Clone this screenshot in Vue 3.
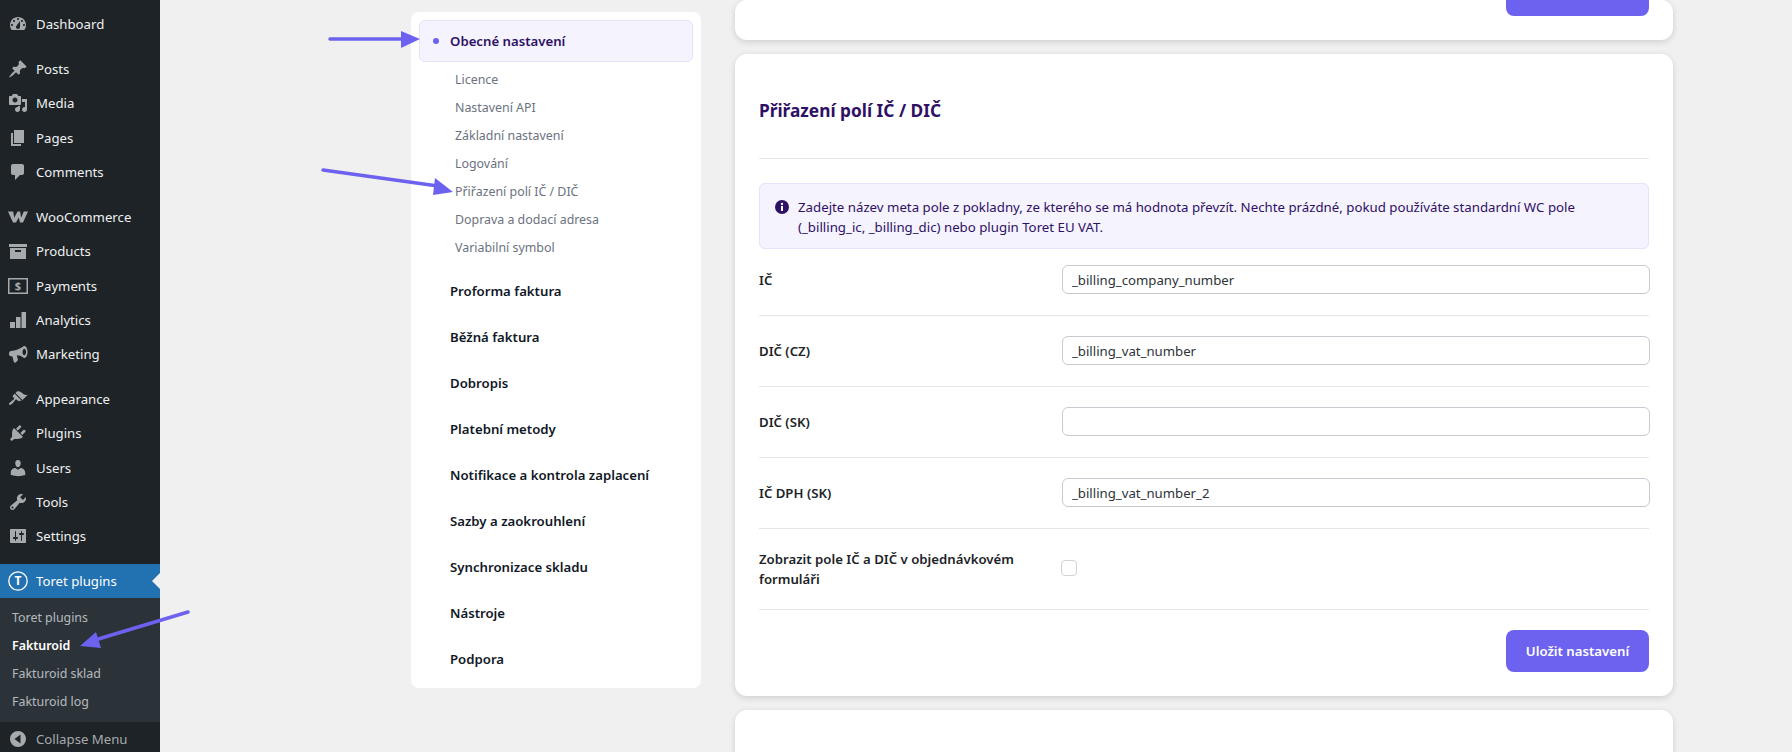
<template>
  <div class="page">
    <aside class="adminmenu">
      <div v-for="(group, g) in menuGroups" :key="g" class="menu-group">
        <div v-for="item in group" :key="item.label" class="menu-item">
          <span class="menu-icon">
            <svg width="20" height="20" viewBox="0 0 20 20">
              <path :d="item.icon" fill="#a7aaad" fill-rule="evenodd" />
              <text v-if="item.label === 'Payments'" x="10" y="14" text-anchor="middle" class="dollar">$</text>
            </svg>
          </span>
          {{ item.label }}
        </div>
      </div>
      <div class="menu-item active">
        <span class="menu-icon">
          <svg width="20" height="20" viewBox="0 0 20 20">
            <circle cx="10" cy="10" r="9.2" fill="none" stroke="#fff" stroke-width="1.3" />
            <text x="10" y="14.4" text-anchor="middle" class="toret-t">T</text>
          </svg>
        </span>
        Toret plugins
      </div>
      <div class="submenu">
        <div v-for="sub in subItems" :key="sub" class="sub-item" :class="{ current: sub === 'Fakturoid' }">{{ sub }}</div>
      </div>
      <div class="collapse">
        <span class="menu-icon">
          <svg width="20" height="20" viewBox="0 0 20 20">
            <path d="M10 2a8 8 0 1 1 0 16 8 8 0 0 1 0-16zm2.5 3.5L6.5 10l6 4.5z" fill="#a7aaad" fill-rule="evenodd" />
          </svg>
        </span>
        Collapse Menu
      </div>
    </aside>

    <main class="content">
      <nav class="side-nav">
        <div class="nav-active"><span class="dot"></span>Obecné nastavení</div>
        <div class="nav-subs">
          <div v-for="link in navLinks" :key="link" class="nav-sub">{{ link }}</div>
        </div>
        <div v-for="section in navSections" :key="section" class="nav-section">{{ section }}</div>
      </nav>

      <div class="cards">
        <div class="card card-top">
          <div class="btn-stub"></div>
        </div>

        <section class="card card-main">
          <h2 class="card-title">Přiřazení polí IČ / DIČ</h2>
          <div class="notice">
            <svg class="notice-icon" width="14" height="14" viewBox="0 0 14 14">
              <circle cx="7" cy="7" r="7" fill="#2e1065" />
              <rect x="6" y="6" width="2" height="5" fill="#fff" />
              <circle cx="7" cy="4" r="1.15" fill="#fff" />
            </svg>
            <p>Zadejte název meta pole z pokladny, ze kterého se má hodnota převzít. Nechte prázdné, pokud používáte standardní WC pole (_billing_ic, _billing_dic) nebo plugin Toret EU VAT.</p>
          </div>
          <div v-for="field in fields" :key="field.label" class="row">
            <label class="row-label">{{ field.label }}</label>
            <input class="text-input" type="text" :value="field.value" />
          </div>
          <div class="row row-check">
            <label class="row-label">Zobrazit pole IČ a DIČ v objednávkovém formuláři</label>
            <span class="checkbox"></span>
          </div>
          <div class="actions">
            <button class="save-btn" type="button">Uložit nastavení</button>
          </div>
        </section>

        <div class="card card-bottom"></div>
      </div>
    </main>

    <!-- annotation arrows drawn over the screenshot -->
    <svg class="arrows" width="1792" height="752" viewBox="0 0 1792 752">
      <g fill="#6c62ef" stroke="#6c62ef" stroke-linecap="round">
        <line x1="330" y1="39" x2="404" y2="39" stroke-width="3.5" />
        <polygon points="401,31 420,39 401,48" stroke="none" />
        <line x1="323" y1="170" x2="438" y2="186" stroke-width="3.5" />
        <polygon points="435,178 453,192 433,195" stroke="none" />
        <line x1="188" y1="612" x2="95" y2="640" stroke-width="3.5" />
        <polygon points="96,632 80,646 101,648" stroke="none" />
      </g>
    </svg>
  </div>
</template>

<script setup>
const icons = {
  dashboard: 'M3.76 16h12.48c1.1-1.37 1.76-3.11 1.76-5 0-4.42-3.58-8-8-8s-8 3.58-8 8c0 1.89.66 3.63 1.76 5zM10 4c.55 0 1 .45 1 1s-.45 1-1 1-1-.45-1-1 .45-1 1-1zM6 6c.55 0 1 .45 1 1s-.45 1-1 1-1-.45-1-1 .45-1 1-1zm8 0c.55 0 1 .45 1 1s-.45 1-1 1-1-.45-1-1 .45-1 1-1zm-5.37 5.55L12 7v6c0 1.1-.9 2-2 2s-2-.9-2-2c0-.57.24-1.08.63-1.45zM4 10c.55 0 1 .45 1 1s-.45 1-1 1-1-.45-1-1 .45-1 1-1zm12 0c.55 0 1 .45 1 1s-.45 1-1 1-1-.45-1-1 .45-1 1-1z',
  posts: 'M10.44 3.02l1.82-1.82 6.36 6.35-1.83 1.82c-1.05-.68-2.48-.57-3.41.36l-.75.75c-.92.93-1.04 2.35-.35 3.41l-1.83 1.82-2.41-2.41-2.8 2.79c-.42.42-3.38 2.71-3.8 2.29s1.86-3.39 2.28-3.81l2.79-2.79L4.1 9.36l1.83-1.82c1.05.69 2.48.57 3.4-.36l.75-.75c.93-.92 1.05-2.35.36-3.41z',
  media: 'M13 11V4c0-.55-.45-1-1-1h-1.67L9 1H5L3.67 3H2c-.55 0-1 .45-1 1v7c0 .55.45 1 1 1h10c.55 0 1-.45 1-1zM7 4.5c1.38 0 2.5 1.12 2.5 2.5S8.38 9.5 7 9.5 4.5 8.38 4.5 7 5.62 4.5 7 4.5zM14 6h5v10.5c0 1.38-1.12 2.5-2.5 2.5S14 17.88 14 16.5s1.12-2.5 2.5-2.5c.17 0 .34.02.5.05V9h-3V6zm-4 8.05V13h2v3.5c0 1.38-1.12 2.5-2.5 2.5S7 17.88 7 16.5 8.12 14 9.5 14c.17 0 .34.02.5.05z',
  pages: 'M6 15V2h10v13H6zm-1 1h8v2H3V5h2v11z',
  comments: 'M5 2h9c1.1 0 2 .9 2 2v7c0 1.1-.9 2-2 2h-2l-5 5v-5H5c-1.1 0-2-.9-2-2V4c0-1.1.9-2 2-2z',
  woo: 'M0 4.5h5.2l1 6.2 3.3-6.2h2.6l1 6.2 2.7-6.2H20l-5 11h-3l-1.2-5-2.8 5H5z',
  products: 'M19 3v3H1V3h18zM2 7h16v11H2V7zm5 2v2h6V9H7z',
  payments: 'M0 2h20v16H0zM1.5 3.5v13h17v-13z',
  analytics: 'M2 12h5v6H2zM8 7h4.5v11H8zM13.5 2H18v16h-4.5z',
  marketing: 'M16 2c2.2 0 3.5 2.4 3.5 6s-1.3 6-3.5 6c-2-1.8-4-2.6-7.2-2.8L10 16l-2.2 2.5H6L4.4 12.6 3 12.3C1.6 12 1 11 1 9.7s.6-2.3 2-2.6c4.5-.6 8.8-2.1 13-5.1zm.3 2.8c-1 0-1.8 1.4-1.8 3.2s.8 3.2 1.8 3.2 1.8-1.4 1.8-3.2-.8-3.2-1.8-3.2z',
  appearance: 'M14.48 11.06L7.41 3.99l1.5-1.5c.5-.56 2.3-.47 3.51.32 1.21.8 1.43 1.28 2.91 2.1 1.18.64 2.45 1.26 4.45.85zm-.71.71L6.7 4.7 4.93 6.47c-.39.39-.39 1.02 0 1.41l1.06 1.06c.39.39.39 1.03 0 1.42-.6.6-1.43 1.11-2.21 1.69-.35.26-.7.53-1.01.84C1.43 13.23.4 14.8 1.2 15.6c.79.79 2.36-.23 3.71-1.57.31-.31.58-.66.85-1.02.58-.78 1.09-1.6 1.69-2.2.39-.39 1.02-.39 1.41 0l1.06 1.06c.39.39 1.02.39 1.41 0z',
  plugins: 'M13.11 4.36L9.87 7.6 8 5.73l3.24-3.24c.35-.34 1.05-.2 1.56.32.52.51.66 1.21.31 1.55zm-8 1.77l.91-1.12 9.01 9.01-1.19.84c-.71.71-2.63 1.16-3.82 1.16H6.14L4.9 17.26c-.59.59-1.54.59-2.12 0-.59-.58-.59-1.53 0-2.12l1.24-1.24v-3.88c0-1.13.4-3.19 1.09-3.89zm7.26 3.97l3.24-3.24c.34-.35 1.04-.21 1.55.31.52.51.66 1.21.31 1.55l-3.24 3.25z',
  users: 'M10 9.25c-2.27 0-2.73-3.44-2.73-3.44C7 4.02 7.82 2 9.97 2c2.16 0 2.98 2.02 2.71 3.81 0 0-.41 3.44-2.68 3.44zm0 2.57L12.72 10c2.39 0 4.52 2.33 4.52 4.53v2.49s-3.65 1.13-7.24 1.13c-3.65 0-7.24-1.13-7.24-1.13v-2.49c0-2.25 1.94-4.48 4.47-4.48z',
  tools: 'M16.68 9.77c-1.34 1.34-3.3 1.67-4.95.99l-5.41 6.52c-.99.99-2.59.99-3.58 0s-.99-2.59 0-3.57l6.52-5.42c-.68-1.65-.35-3.61.99-4.95 1.28-1.28 3.12-1.62 4.72-1.06l-2.89 2.89 2.82 2.82 2.86-2.87c.53 1.58.18 3.39-1.08 4.65zM3.81 16.21c.4.39 1.04.39 1.43 0 .4-.4.4-1.04 0-1.43-.39-.4-1.03-.4-1.43 0-.39.39-.39 1.03 0 1.43z',
  settings: 'M18 16V4c0-.55-.45-1-1-1H3c-.55 0-1 .45-1 1v12c0 .55.45 1 1 1h14c.55 0 1-.45 1-1zM8 11h1c.55 0 1 .45 1 1s-.45 1-1 1H8v1.5c0 .28-.22.5-.5.5s-.5-.22-.5-.5V13H6c-.55 0-1-.45-1-1s.45-1 1-1h1V5.5c0-.28.22-.5.5-.5s.5.22.5.5V11zm5-2h-1c-.55 0-1-.45-1-1s.45-1 1-1h1V5.5c0-.28.22-.5.5-.5s.5.22.5.5V7h1c.55 0 1 .45 1 1s-.45 1-1 1h-1v5.5c0 .28-.22.5-.5.5s-.5-.22-.5-.5V9z'
}

const menuGroups = [
  [{ label: 'Dashboard', icon: icons.dashboard }],
  [
    { label: 'Posts', icon: icons.posts },
    { label: 'Media', icon: icons.media },
    { label: 'Pages', icon: icons.pages },
    { label: 'Comments', icon: icons.comments }
  ],
  [
    { label: 'WooCommerce', icon: icons.woo },
    { label: 'Products', icon: icons.products },
    { label: 'Payments', icon: icons.payments },
    { label: 'Analytics', icon: icons.analytics },
    { label: 'Marketing', icon: icons.marketing }
  ],
  [
    { label: 'Appearance', icon: icons.appearance },
    { label: 'Plugins', icon: icons.plugins },
    { label: 'Users', icon: icons.users },
    { label: 'Tools', icon: icons.tools },
    { label: 'Settings', icon: icons.settings }
  ]
]

const subItems = ['Toret plugins', 'Fakturoid', 'Fakturoid sklad', 'Fakturoid log']

const navLinks = [
  'Licence',
  'Nastavení API',
  'Základní nastavení',
  'Logování',
  'Přiřazení polí IČ / DIČ',
  'Doprava a dodací adresa',
  'Variabilní symbol'
]

const navSections = [
  'Proforma faktura',
  'Běžná faktura',
  'Dobropis',
  'Platební metody',
  'Notifikace a kontrola zaplacení',
  'Sazby a zaokrouhlení',
  'Synchronizace skladu',
  'Nástroje',
  'Podpora'
]

const fields = [
  { label: 'IČ', value: '_billing_company_number' },
  { label: 'DIČ (CZ)', value: '_billing_vat_number' },
  { label: 'DIČ (SK)', value: '' },
  { label: 'IČ DPH (SK)', value: '_billing_vat_number_2' }
]
</script>

<style>
html,
body {
  margin: 0;
  background: #f0f0f1;
}
</style>

<style scoped>
.page {
  position: relative;
  display: flex;
  width: 1792px;
  height: 752px;
  overflow: hidden;
  background: #f0f0f1;
  font-family: "Noto Sans", "Open Sans", sans-serif;
  font-size: 13.2px;
}

.adminmenu {
  flex: 0 0 160px;
  background: #1d2327;
  color: #f0f0f1;
  padding-top: 7px;
  box-sizing: border-box;
  display: flex;
  flex-direction: column;
}

.adminmenu > * {
  flex: none;
}

.menu-group {
  margin-bottom: 10.85px;
}

.menu-item {
  display: flex;
  align-items: center;
  height: 34.25px;
}

.menu-icon {
  flex: 0 0 36px;
  display: flex;
  justify-content: center;
}

.dollar {
  font-size: 11px;
  font-weight: 700;
  fill: #a7aaad;
}

.active {
  position: relative;
  background: #2271b1;
  color: #fff;
}

.active::after {
  content: "";
  position: absolute;
  right: 0;
  top: 50%;
  margin-top: -8px;
  border: 8px solid transparent;
  border-right-color: #f0f0f1;
  border-left-width: 0;
}

.toret-t {
  font-size: 12px;
  font-weight: 700;
  fill: #fff;
}

.submenu {
  background: #2c3338;
  padding: 6px 0;
}

.sub-item {
  height: 28px;
  line-height: 28px;
  padding-left: 12px;
  font-size: 12.4px;
  color: rgba(240, 246, 252, 0.7);
}

.sub-item.current {
  color: #fff;
  font-weight: 600;
}

.collapse {
  display: flex;
  align-items: center;
  height: 34px;
  color: #a7aaad;
}

.content {
  flex: 1;
  display: flex;
  align-items: flex-start;
  gap: 34px;
  padding-left: 251px;
}

.side-nav {
  flex: 0 0 290px;
  box-sizing: border-box;
  height: 676px;
  margin-top: 12px;
  padding: 8px;
  background: #fff;
  border-radius: 8px;
}

.nav-active {
  display: flex;
  align-items: center;
  height: 42px;
  box-sizing: border-box;
  padding-left: 13px;
  background: #f5f3fd;
  border: 1px solid #e8e2fb;
  border-radius: 6px;
  color: #2e1065;
  font-weight: 600;
}

.dot {
  width: 6px;
  height: 6px;
  margin-right: 11px;
  border-radius: 50%;
  background: #6c62ef;
}

.nav-subs {
  padding: 3.5px 0 6.5px 36px;
}

.nav-sub {
  height: 28px;
  line-height: 28px;
  font-size: 12.4px;
  color: #6b7280;
}

.nav-section {
  height: 46px;
  line-height: 46px;
  padding-left: 31px;
  color: #111827;
  font-weight: 600;
}

.cards {
  flex: 0 0 938px;
  display: flex;
  flex-direction: column;
  gap: 14px;
}

.card {
  background: #fff;
  border-radius: 12px;
  box-shadow: 0 2px 6px rgba(0, 0, 0, 0.14);
  box-sizing: border-box;
  padding: 0 24px;
}

.card-top {
  height: 40px;
  display: flex;
  justify-content: flex-end;
}

.btn-stub {
  width: 143px;
  height: 16px;
  background: #6c62ef;
  border-radius: 0 0 8px 8px;
}

.card-main {
  height: 642px;
}

.card-title {
  margin: 0;
  height: 105px;
  box-sizing: border-box;
  padding-top: 44px;
  border-bottom: 1px solid #e5e5ea;
  font-size: 17.3px;
  line-height: 26px;
  font-weight: 700;
  color: #2e1065;
}

.notice {
  display: flex;
  gap: 9px;
  box-sizing: border-box;
  height: 66px;
  margin-top: 24px;
  padding: 13px 14px;
  background: #f5f3fd;
  border: 1px solid #e8e2fb;
  border-radius: 6px;
  color: #2e1065;
  line-height: 20px;
  font-size: 13.26px;
}

.notice p {
  margin: 0;
}

.notice-icon {
  flex: none;
  margin-top: 3px;
  margin-left: 1px;
}

.row {
  display: flex;
  align-items: center;
  box-sizing: border-box;
  padding: 20px 0 21px;
  border-bottom: 1px solid #e5e5ea;
}

.notice + .row {
  padding-top: 16px;
}

.row-label {
  flex: 0 0 303px;
  color: #1d2327;
  font-weight: 600;
  line-height: 20px;
}

.text-input {
  flex: 1;
  height: 29px;
  box-sizing: border-box;
  padding: 0 9px;
  border: 1px solid #c9c9d1;
  border-radius: 6px;
  background: #fff;
  font: inherit;
  color: #2c3338;
  outline: none;
  margin-right: -1px;
}

.row-check {
  height: 81px;
  padding: 0;
}

.checkbox {
  width: 16px;
  height: 16px;
  box-sizing: border-box;
  border: 1px solid #d1d1d8;
  border-radius: 4px;
  background: #fff;
  margin: -3px 0 0 -1px;
}

.actions {
  display: flex;
  justify-content: flex-end;
  padding-top: 20px;
}

.save-btn {
  width: 143px;
  height: 42px;
  border: 0;
  border-radius: 8px;
  background: #6c62ef;
  color: #fff;
  font: inherit;
  font-weight: 600;
}

.card-bottom {
  height: 80px;
}

.arrows {
  position: absolute;
  left: 0;
  top: 0;
  pointer-events: none;
}
</style>
